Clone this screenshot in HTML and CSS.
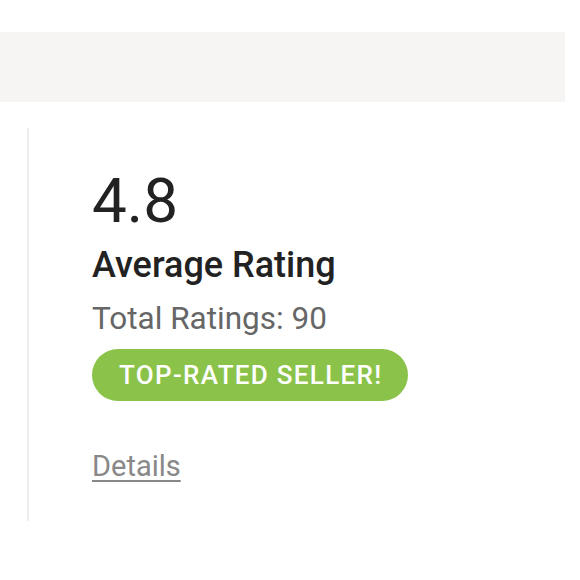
FILE: index.html
```
<!DOCTYPE html>
<html>
<head>
<meta charset="utf-8">
<link rel="stylesheet" href="styles.css">
</head>
<body>
<div class="topbar"></div>
<section class="rating">
  <div class="score">4.8</div>
  <h2 class="title">Average Rating</h2>
  <div class="total">Total Ratings: 90</div>
  <div class="badge-row"><span class="badge">TOP-RATED SELLER!</span></div>
  <a class="details" href="#">Details</a>
</section>
</body>
</html>
```
FILE: styles.css
```
html, body {
  margin: 0;
  padding: 0;
  background: #ffffff;
  font-family: Roboto, "Liberation Sans", sans-serif;
}
.topbar {
  margin-top: 32px;
  height: 70px;
  width: 565px;
  background: #f6f5f3;
}
.rating {
  margin: 26px 0 0 27px;
  border-left: 2px solid #f0eeeb;
  padding: 42px 0 40px 63px;
  display: flex;
  flex-direction: column;
  align-items: flex-start;
}
.score {
  font-size: 62px;
  line-height: 62px;
  font-weight: 400;
  color: #222222;
}
.title {
  margin: 15px 0 0 0;
  font-size: 36px;
  line-height: 36px;
  font-weight: 500;
  color: #222222;
}
.total {
  margin-top: 20px;
  font-size: 31.5px;
  line-height: 32px;
  color: #666666;
}
.badge-row {
  margin-top: 14px;
  display: flex;
}
.badge {
  display: inline-block;
  height: 52px;
  line-height: 52px;
  padding: 0 26px 0 27px;
  border-radius: 26px;
  background: #8bc34a;
  color: #ffffff;
  font-size: 26px;
  font-weight: 500;
  letter-spacing: 1.3px;
}
.details {
  margin-top: 51px;
  font-size: 29px;
  line-height: 29px;
  color: #888888;
  text-decoration: underline;
  text-underline-offset: 4px;
}
```
